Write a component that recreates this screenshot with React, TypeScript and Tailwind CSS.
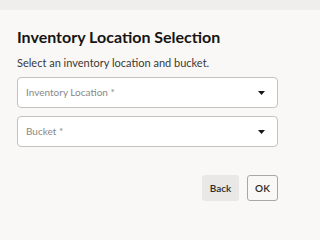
export default function App() {
  const font = { fontFamily: 'Lato, "Open Sans", sans-serif' };

  const Caret = () => (
    <svg width="7" height="4" viewBox="0 0 7 4" className="shrink-0">
      <path d="M0 0 H7 L3.5 4 Z" fill="#161513" />
    </svg>
  );

  return (
    <div className="w-full min-h-screen bg-[#f9f8f6] flex flex-col overflow-hidden" style={font}>
      {/* blurred page behind the dialog */}
      <div className="h-[10px] bg-[#efeeec]" />

      <div className="flex flex-col pl-[17px] pr-[17px] pt-[17px] w-[295px]">
        <h1 className="text-[16px] leading-[20px] font-bold text-[#161513]">
          Inventory Location Selection
        </h1>
        <p className="mt-[8px] text-[11px] leading-[16px] text-[#3a3937]">
          Select an inventory location and bucket.
        </p>

        <div className="mt-[6px] flex flex-col gap-[8px]">
          {/* Inventory Location */}
          <div className="h-[31px] rounded-[4px] border border-[#c4c2be] bg-white flex items-center justify-between pl-[8px] pr-[12px]">
            <span className="text-[10px] text-[#8a8885]">Inventory Location *</span>
            <Caret />
          </div>

          {/* Bucket */}
          <div className="h-[31px] rounded-[4px] border border-[#c4c2be] bg-white flex items-center justify-between pl-[8px] pr-[12px]">
            <span className="text-[10px] text-[#8a8885]">Bucket *</span>
            <Caret />
          </div>
        </div>

        <div className="mt-[28px] flex justify-end gap-[8px]">
          <button className="h-[26px] w-[37px] rounded-[3px] bg-[#e9e8e6] text-[10px] font-semibold text-[#2b2a28]">
            Back
          </button>
          <button className="h-[26px] w-[31px] rounded-[3px] border border-[#a9a7a3] bg-transparent text-[10px] font-semibold text-[#2b2a28]">
            OK
          </button>
        </div>
      </div>
    </div>
  );
}
